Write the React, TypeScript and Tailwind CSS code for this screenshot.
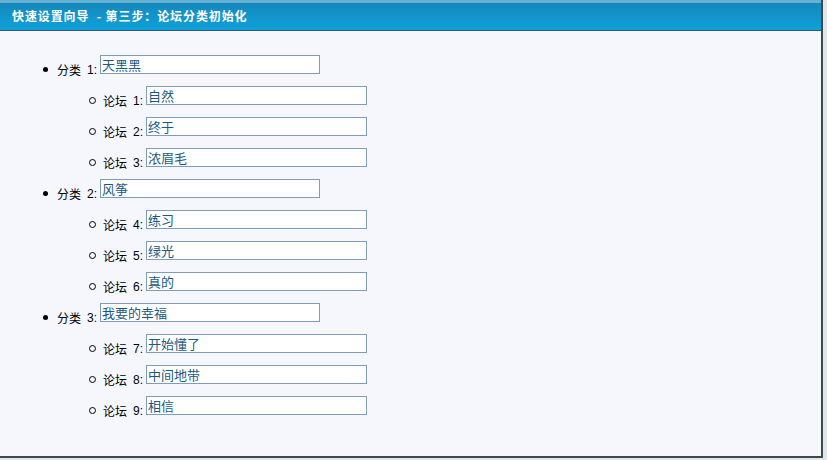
const categories = [
  { no: 1, name: '天黑黑', forums: [{ no: 1, name: '自然' }, { no: 2, name: '终于' }, { no: 3, name: '浓眉毛' }] },
  { no: 2, name: '风筝', forums: [{ no: 4, name: '练习' }, { no: 5, name: '绿光' }, { no: 6, name: '真的' }] },
  { no: 3, name: '我要的幸福', forums: [{ no: 7, name: '开始懂了' }, { no: 8, name: '中间地带' }, { no: 9, name: '相信' }] },
];

const font = 'font-["SimSun","Noto_Sans_CJK_SC",sans-serif]';

function Row({ indent, bullet, label, no, value, width }: { indent: string; bullet: 'disc' | 'circle'; label: string; no: number; value: string; width: string }) {
  return (
    <li className={`flex items-end h-[19px] ${indent}`}>
      <span className="w-[14px] flex justify-start items-center h-[12px] translate-y-[1px]">
        {bullet === 'disc' ? (
          <span className="block w-[5px] h-[5px] rounded-full bg-black" />
        ) : (
          <span className="block w-[7px] h-[7px] rounded-full border border-black" />
        )}
      </span>
      <span className="text-[12px] leading-[12px] text-black translate-y-[2px] whitespace-pre">{label}</span>
      <span className='ml-[6px] mr-[3px] text-[12px] leading-[12px] text-black translate-y-[2px] font-["Liberation_Sans",sans-serif]'>{no}:</span>
      <input
        defaultValue={value}
        className={`${width} h-[19px] border border-[#7f9db9] bg-white px-[1px] text-[13px] leading-[17px] text-[#1b5a80] outline-none ${font}`}
      />
    </li>
  );
}

export default function App() {
  return (
    <div className={`w-[827px] h-[460px] bg-[#dfe6ee] ${font}`}>
      <div className="w-[823px] h-[458px] border-r-2 border-b-2 border-[#3d4a48] bg-[#f5f7fd] flex flex-col">
        <header className="h-[31px] border-b border-[#35586a] bg-gradient-to-b from-[#1585b8] to-[#0fa2da] flex flex-col">
          <div className="h-[3px] bg-[#64b1d3]" />
          <div className="flex-1 flex items-center pl-[12px] pb-[2px] text-white font-bold text-[12px] tracking-[0.9px]">
            快速设置向导&nbsp; - 第三步：论坛分类初始化
          </div>
        </header>
        <ul className="flex flex-col gap-[12px] pt-[24px]">
          {categories.map(c => (
            <li key={c.no} className="flex flex-col gap-[12px]">
              <ul>
                <Row indent="pl-[43px]" bullet="disc" label="分类" no={c.no} value={c.name} width="w-[220px]" />
              </ul>
              <ul className="flex flex-col gap-[12px]">
                {c.forums.map(f => (
                  <Row key={f.no} indent="pl-[89px]" bullet="circle" label="论坛" no={f.no} value={f.name} width="w-[221px]" />
                ))}
              </ul>
            </li>
          ))}
        </ul>
      </div>
    </div>
  );
}
